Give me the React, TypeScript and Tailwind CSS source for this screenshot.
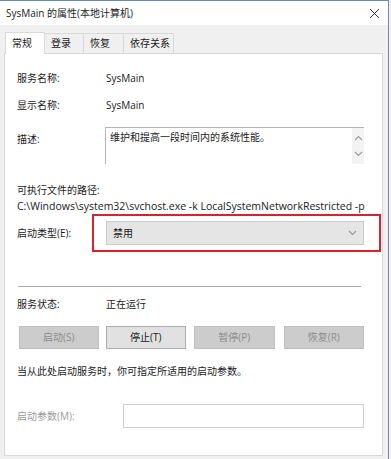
import React from "react";

const font = { fontFamily: '"Open Sans", "Noto Sans CJK SC", sans-serif' };

function Chevron({ up = false }: { up?: boolean }) {
  return (
    <svg width="9" height="6" viewBox="0 0 9 6" className="block">
      <path
        d={up ? "M1 5 L4.5 1.5 L8 5" : "M1 1 L4.5 4.5 L8 1"}
        fill="none"
        stroke="#9a9a9a"
        strokeWidth="1.1"
      />
    </svg>
  );
}

export default function App() {
  return (
    <div
      className="w-[391px] h-[459px] bg-[#f0f0f0] overflow-hidden text-[10px] text-[#1a1a1a]"
      style={font}
    >
      <div className="w-[389px] h-[459px] border-t border-r border-[#6f8aa8] bg-[#f0f0f0] flex flex-col">
        {/* Title bar */}
        <div className="h-[24px] bg-white flex items-center justify-between pl-[6px] pr-[8px] shrink-0">
          <span className="text-[10px] leading-[16px] text-[#222]">SysMain 的属性(本地计算机)</span>
          <svg width="11" height="11" viewBox="0 0 11 11">
            <path d="M1 1 L10 10 M10 1 L1 10" stroke="#333" strokeWidth="1" />
          </svg>
        </div>
        {/* Tabs */}
        <div className="flex items-end pl-[5px] pt-[7px] h-[28px] shrink-0">
          <div className="h-[22px] w-[40px] bg-white border border-b-0 border-[#d9d9d9] flex items-center pl-[6px] relative z-10 -mb-[1px]">
            常规
          </div>
          <div className="h-[20px] w-[39px] border-t border-r border-[#d9d9d9] flex items-center pl-[6px]">登录</div>
          <div className="h-[20px] w-[40px] border-t border-r border-[#d9d9d9] flex items-center pl-[6px]">恢复</div>
          <div className="h-[20px] w-[50px] border-t border-r border-[#d9d9d9] flex items-center pl-[6px]">依存关系</div>
        </div>
        {/* Panel */}
        <div className="ml-[4px] w-[379px] h-[403px] bg-white border border-[#d9d9d9] pl-[12px] pr-[18px] flex flex-col">
          <div className="mt-[15px] h-[18px] flex items-center">
            <span className="w-[89px]">服务名称:</span>
            <span>SysMain</span>
          </div>
          <div className="mt-[9px] h-[18px] flex items-center">
            <span className="w-[89px]">显示名称:</span>
            <span>SysMain</span>
          </div>
          <div className="mt-[13px] h-[37px] flex">
            <span className="w-[88px] pt-[3px] leading-[18px]">描述:</span>
            <div className="flex-1 flex border-t border-l border-[#b4b4b4] h-[37px]">
              <div className="flex-1 pl-[4px] pt-[1px] leading-[16px]">维护和提高一段时间内的系统性能。</div>
              <div className="w-[12px] bg-[#f3f3f3] flex flex-col items-center justify-between py-[7px]">
                <Chevron up />
                <Chevron />
              </div>
            </div>
          </div>
          <div className="mt-[18px] h-[16px] leading-[16px]">可执行文件的路径:</div>
          <div className="h-[16px] leading-[16px] whitespace-nowrap text-[10.5px]">
            C:\Windows\system32\svchost.exe -k LocalSystemNetworkRestricted -p
          </div>
          <div className="mt-[7px] h-[24px] flex items-center">
            <span className="w-[89px]">启动类型(E):</span>
            <div className="relative flex-1 h-[24px]">
              <div className="h-full bg-[#e5e5e5] border border-[#cccccc] flex items-center justify-between pl-[6px] pr-[6px]">
                <span>禁用</span>
                <Chevron />
              </div>
              <div className="absolute -top-[7px] -bottom-[7px] -left-[14px] -right-[17px] border-2 border-[#d9222a] pointer-events-none" />
            </div>
          </div>
          <div className="mt-[41px] ml-[1px] mr-[3px] h-px bg-[#a8a8a8]" />
          <div className="mt-[8px] h-[18px] flex items-center">
            <span className="w-[89px]">服务状态:</span>
            <span>正在运行</span>
          </div>
          <div className="mt-[13px] h-[23px] flex pl-[2px] gap-[7px]">
            <div className="w-[80px] h-[23px] bg-[#cccccc] border border-[#bfbfbf] flex items-center justify-center text-[#8c8c8c]">启动(S)</div>
            <div className="w-[81px] h-[23px] bg-[#e1e1e1] border border-[#adadad] flex items-center justify-center">停止(T)</div>
            <div className="w-[81px] h-[23px] bg-[#cccccc] border border-[#bfbfbf] flex items-center justify-center text-[#8c8c8c] ml-[1px]">暂停(P)</div>
            <div className="w-[81px] h-[23px] bg-[#cccccc] border border-[#bfbfbf] flex items-center justify-center text-[#8c8c8c] ml-[2px]">恢复(R)</div>
          </div>
          <div className="mt-[13px] h-[18px] leading-[18px]">当从此处启动服务时，你可指定所适用的启动参数。</div>
          <div className="mt-[24px] h-[24px] flex items-center">
            <span className="w-[106px] text-[#9a9a9a]">启动参数(M):</span>
            <div className="flex-1 h-[24px] border border-[#cfcfcf] bg-white" />
          </div>
        </div>
      </div>
    </div>
  );
}
